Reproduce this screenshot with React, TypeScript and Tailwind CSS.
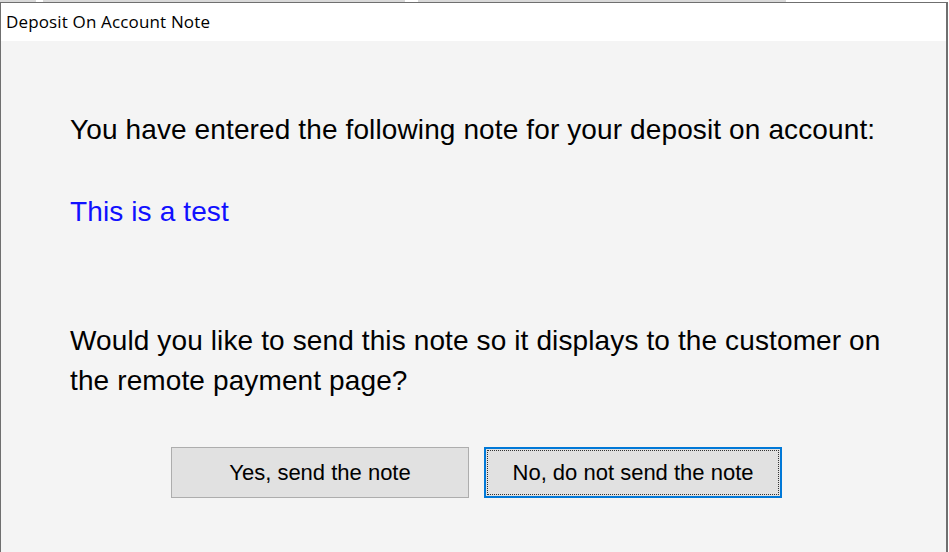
export default function App() {
  return (
    <div className="w-[949px] h-[552px] bg-white overflow-hidden flex flex-col" style={{ fontFamily: '"Liberation Sans", Arial, sans-serif' }}>
      {/* strip of the window behind */}
      <div className="h-[2px] flex shrink-0">
        <div className="w-[36px] bg-[#d9d9d9]" />
        <div className="w-[7px] bg-white" />
        <div className="w-[362px] bg-[#d9d9d9]" />
        <div className="w-[13px] bg-white" />
        <div className="w-[368px] bg-[#d9d9d9]" />
        <div className="flex-1 bg-white" />
      </div>
      <div className="flex-1 flex flex-col border-l border-r-2 border-t border-[#6f6f6f] mr-[1px]">
        {/* title bar */}
        <div className="h-[38px] bg-white flex items-center pl-[5px] shrink-0">
          <span className="text-[17px] text-black tracking-[0.15px]" style={{ fontFamily: '"Open Sans", "Noto Sans", sans-serif' }}>
            Deposit On Account Note
          </span>
        </div>
        {/* body */}
        <div className="flex-1 bg-[#f4f4f4] pl-[69px] pt-[71px] text-[28px] text-black tracking-[0.12px]">
          <p className="leading-[36px]">You have entered the following note for your deposit on account:</p>
          <p className="mt-[46px] leading-[36px] text-[#1010ff]">This is a test</p>
          <p className="mt-[91px] leading-[40px] w-[840px]">
            Would you like to send this note so it displays to the customer on the remote payment page?
          </p>
          <div className="flex gap-[15px] mt-[46px] ml-[101px] tracking-normal">
            <button className="w-[298px] h-[51px] bg-[#e1e1e1] border border-[#adadad] text-[22px] text-black">
              Yes, send the note
            </button>
            <button className="w-[298px] h-[51px] bg-[#e1e1e1] border-2 border-[#0078d7] p-[1px] text-[22px] text-black">
              <div className="w-full h-full border border-dotted border-[#333] flex items-center justify-center">
                No, do not send the note
              </div>
            </button>
          </div>
        </div>
      </div>
    </div>
  );
}
